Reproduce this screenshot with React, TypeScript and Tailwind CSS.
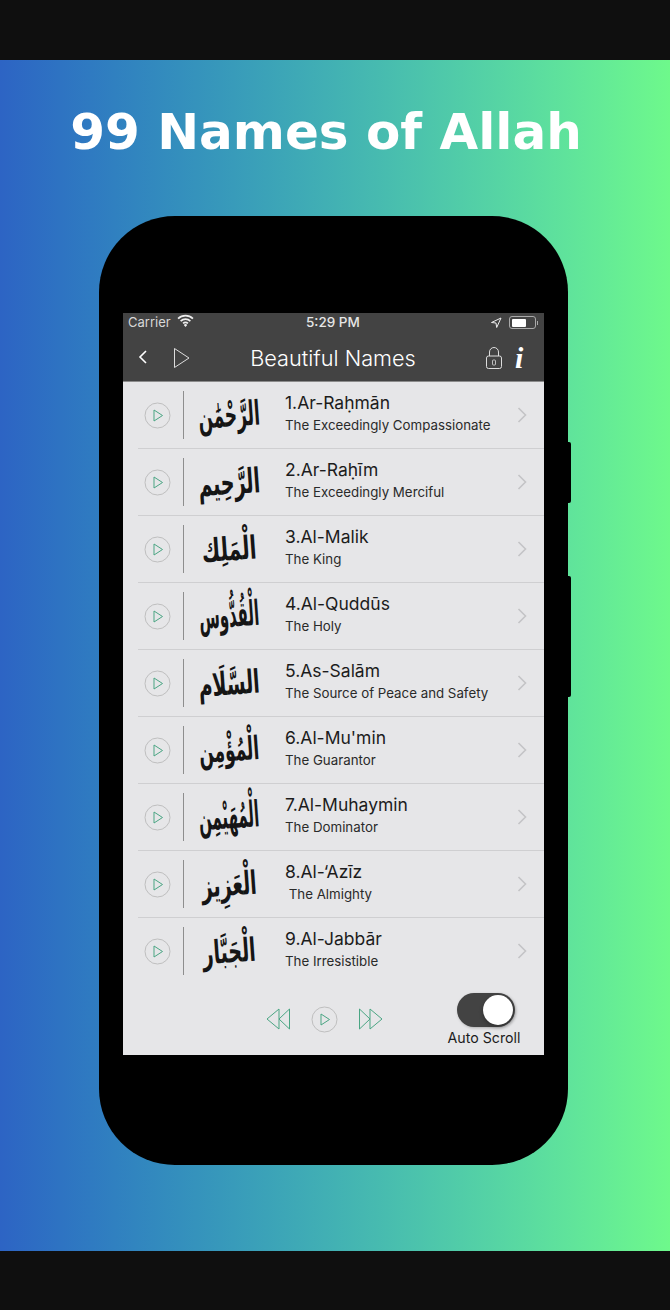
const names = [
  { ar: "الرَّحْمَٰن", size: "text-[17px] scale-y-[2]", title: "1.Ar-Raḥmān", sub: "The Exceedingly Compassionate" },
  { ar: "الرَّحِيم", size: "text-[19px] scale-y-[1.8]", title: "2.Ar-Raḥīm", sub: "The Exceedingly Merciful" },
  { ar: "الْمَلِك", size: "text-[20px] scale-y-[1.6]", title: "3.Al-Malik", sub: "The King" },
  { ar: "الْقُدُّوس", size: "text-[15px] scale-y-[2.3]", title: "4.Al-Quddūs", sub: "The Holy" },
  { ar: "السَّلَام", size: "text-[19px] scale-y-[1.7]", title: "5.As-Salām", sub: "The Source of Peace and Safety" },
  { ar: "الْمُؤْمِن", size: "text-[17px] scale-y-[1.9]", title: "6.Al-Mu'min", sub: "The Guarantor" },
  { ar: "الْمُهَيْمِن", size: "text-[15px] scale-y-[2.4]", title: "7.Al-Muhaymin", sub: "The Dominator" },
  { ar: "الْعَزِيز", size: "text-[19px] scale-y-[1.7]", title: "8.Al-‘Azīz", sub: " The Almighty" },
  { ar: "الْجَبَّار", size: "text-[19px] scale-y-[1.7]", title: "9.Al-Jabbār", sub: "The Irresistible" },
]

function PlayCircle() {
  return (
    <svg width="27" height="27" viewBox="0 0 27 27" fill="none" className="shrink-0">
      <circle cx="13.5" cy="13.5" r="12.5" stroke="#b4b4b4" strokeWidth="0.8" />
      <path d="M10 8l8.5 5.5L10 19z" stroke="#4aa583" strokeWidth="1" strokeLinejoin="round" />
    </svg>
  )
}

function Row({ ar, size, title, sub, last }: { ar: string; size: string; title: string; sub: string; last: boolean }) {
  return (
    <div className={`flex items-center h-[67px] ml-[15px] border-b ${last ? "border-transparent" : "border-[#cfcfd1]"}`}>
      <div className="ml-[6px] flex">
        <PlayCircle />
      </div>
      <div className="ml-[12px] w-px h-[48px] bg-[#8e8e8e]" />
      <div
        dir="rtl"
        className={`w-[90px] text-center ${size} leading-none text-[#151515] font-bold whitespace-nowrap -rotate-[4deg] font-['DejaVu_Sans',sans-serif]`}
      >
        {ar}
      </div>
      <div className="ml-[11px] pb-[5px] flex-1 flex flex-col text-[#1c1c1c] font-['Inter',sans-serif]">
        <span className="text-[17.5px] leading-[24px]">{title}</span>
        <span className="mt-[1px] text-[13.3px] leading-[18px] whitespace-pre text-[#2a2a2a]">{sub}</span>
      </div>
      <svg width="10" height="16" viewBox="0 0 10 16" fill="none" className="mr-[17px]">
        <path d="M1.5 1l7 7-7 7" stroke="#c4c4c6" strokeWidth="1.6" />
      </svg>
    </div>
  )
}

function StatusBar() {
  return (
    <div className="relative flex items-center justify-between h-[19px] px-[5px] text-[#e6e6e6] text-[13px] font-['Inter',sans-serif]">
      <div className="flex items-center gap-[6px]">
        <span className="text-[#d8d8d8]">Carrier</span>
        <svg width="17" height="13" viewBox="0 0 16 12" fill="none" className="-mt-[4px]">
          <path d="M1 4.2a10 10 0 0 1 14 0M3.4 6.6a6.6 6.6 0 0 1 9.2 0M5.7 8.8a3.3 3.3 0 0 1 4.6 0" stroke="#eee" strokeWidth="1.6" />
          <path d="M8 12l-1.6-1.8a2.2 2.2 0 0 1 3.2 0z" fill="#eee" />
        </svg>
      </div>
      <span className="absolute left-[183px] text-[13.5px] font-medium">5:29 PM</span>
      <div className="flex items-center gap-[7px] pr-[1px]">
        <svg width="12" height="12" viewBox="0 0 12 12" fill="none">
          <path d="M11 1L1.5 5.5l4.5.5.7 4.5z" stroke="#eee" strokeWidth="1" strokeLinejoin="round" />
        </svg>
        <div className="flex items-center">
          <div className="w-[27px] h-[13px] rounded-[3px] border border-[#aaa] p-[1.5px]">
            <div className="w-[14px] h-full bg-white rounded-[1px]" />
          </div>
          <div className="w-[1px] h-[4px] bg-[#aaa] ml-[1px]" />
        </div>
      </div>
    </div>
  )
}

function NavBar() {
  return (
    <div className="relative flex items-center justify-center h-[50px] pt-[6px] border-b border-[#8c8c8c] text-white">
      <svg width="10" height="16" viewBox="0 0 10 16" fill="none" className="absolute left-[15px] top-[17px]">
        <path d="M8 2L2 8l6 6" stroke="white" strokeWidth="1.6" />
      </svg>
      <svg width="18" height="22" viewBox="0 0 18 22" fill="none" className="absolute left-[50px] top-[15px]">
        <path d="M1.5 1.5L16 11 1.5 20.5z" stroke="#ddd" strokeWidth="1" strokeLinejoin="round" />
      </svg>
      <span className="text-[21.7px] font-light font-['Inter',sans-serif] -mt-[3px] ml-[-1px]">Beautiful Names</span>
      <svg width="18" height="24" viewBox="0 0 18 24" fill="none" className="absolute left-[362px] top-[14px]">
        <path d="M4.5 10V6a4.5 4.5 0 0 1 9 0v4" stroke="#ddd" strokeWidth="1" />
        <rect x="1.5" y="10" width="15" height="12.5" rx="2" stroke="#ddd" strokeWidth="1" />
        <rect x="7.5" y="14" width="3" height="5" rx="0.8" stroke="#ddd" strokeWidth="0.8" />
      </svg>
      <span className="absolute left-[392px] top-[6px] text-[30px] leading-[40px] font-bold italic font-['Liberation_Serif',serif]">i</span>
    </div>
  )
}

function BottomControls() {
  return (
    <div className="relative flex-1">
      <svg width="26" height="24" viewBox="0 0 26 24" fill="none" className="absolute left-[142px] top-[22px]">
        <path d="M14 2L2 12l12 10zM24.5 2L14 12l10.5 10z" stroke="#4aa583" strokeWidth="1" strokeLinejoin="round" />
      </svg>
      <div className="absolute left-[188px] top-[21px] flex">
        <PlayCircle />
      </div>
      <svg width="26" height="24" viewBox="0 0 26 24" fill="none" className="absolute left-[235px] top-[22px]">
        <path d="M1.5 2L12 12 1.5 22zM12 2l12 10-12 10z" stroke="#4aa583" strokeWidth="1" strokeLinejoin="round" />
      </svg>
      <div className="absolute left-[324px] top-[8px] flex flex-col items-center w-[74px]">
        <div className="relative ml-[3px] w-[58px] h-[34px] rounded-full bg-[#434343] shadow-[1px_1px_3px_rgba(0,0,0,0.25)]">
          <div className="absolute right-[2px] top-[2px] w-[30px] h-[30px] rounded-full bg-white shadow-[0_2px_4px_rgba(0,0,0,0.3)]" />
        </div>
        <span className="mt-[1px] text-[14.2px] leading-[20px] text-[#1c1c1c] whitespace-nowrap font-['Inter',sans-serif]">Auto Scroll</span>
      </div>
    </div>
  )
}

export default function App() {
  return (
    <div className="w-[670px] h-[1310px] flex flex-col bg-[#0f0f0f] overflow-hidden">
      <div className="h-[60px] shrink-0" />
      <div className="h-[1191px] shrink-0 flex flex-col items-center bg-gradient-to-r from-[#2d64c4] to-[#6ef98b]">
        <h1 className="mt-[37px] h-[70px] leading-[70px] text-[50px] font-bold text-white whitespace-nowrap ml-[-18px] font-['DejaVu_Sans',sans-serif]">
          99 Names of Allah
        </h1>
        <div className="relative mt-[49px] ml-[-3px] w-[469px] h-[949px] rounded-[76px] bg-black pt-[97px] px-[24px]">
          <div className="absolute left-[469px] top-[226px] w-[3px] h-[61px] bg-black rounded-r-[2px]" />
          <div className="absolute left-[469px] top-[360px] w-[3px] h-[121px] bg-black rounded-r-[2px]" />
          <div className="w-[421px] h-[742px] flex flex-col bg-[#e6e6e8]">
            <div className="bg-[#434343]">
              <StatusBar />
              <NavBar />
            </div>
            {names.map((n, i) => (
              <Row key={n.title} ar={n.ar} size={n.size} title={n.title} sub={n.sub} last={i === names.length - 1} />
            ))}
            <BottomControls />
          </div>
        </div>
      </div>
      <div className="flex-1" />
    </div>
  )
}
